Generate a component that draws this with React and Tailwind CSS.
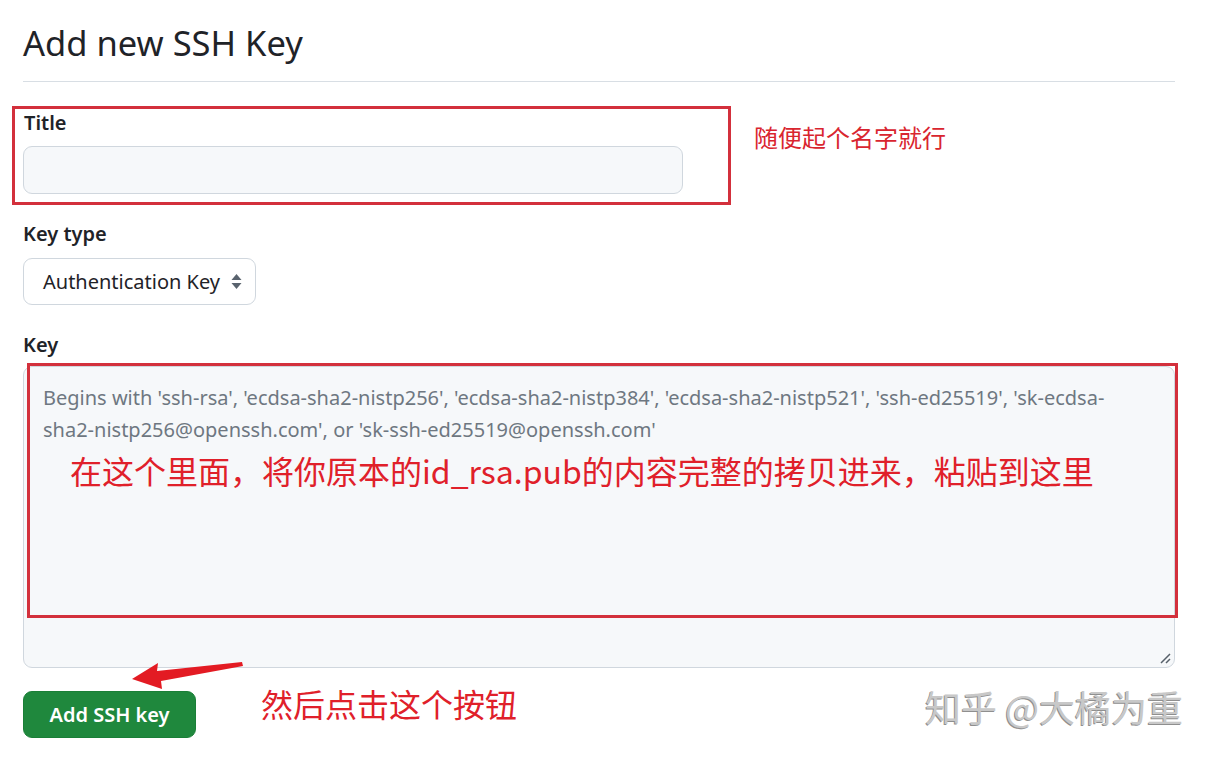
import React from "react";

const ui = { fontFamily: '"Noto Sans", "Liberation Sans", sans-serif' };
const cjk = { fontFamily: '"Noto Sans CJK SC", "Noto Sans", sans-serif' };

export default function App() {
  return (
    <div className="relative w-[1212px] h-[757px] bg-white overflow-hidden text-[#1f2328]" style={ui}>
      <div className="ml-[23px] w-[1152px] pt-[20px] flex flex-col">
        <h2 className="text-[34.5px] leading-[45px] font-normal pb-[16px] border-b border-[#d8dee4]">Add new SSH Key</h2>

        {/* Title row with annotation */}
        <div className="mt-[24px] flex items-start">
          <div className="-ml-[11px] w-[719px] border-[3px] border-[#d3303c] pl-[8px] pb-[8px] flex flex-col">
            <label className="text-[20px] leading-[28px] font-semibold pl-[1px]">Title</label>
            <div className="mt-[9px] w-[660px] h-[48px] rounded-[9px] border border-[#d0d7de] bg-[#f6f8fa]" />
          </div>
          <span className="ml-[23px] mt-[14px] text-[24px] leading-[34px] text-[#d9252f]" style={cjk}>随便起个名字就行</span>
        </div>

        <label className="mt-[15px] text-[20px] leading-[28px] font-semibold">Key type</label>
        <div className="mt-[10px] w-[233px] h-[47px] rounded-[9px] border border-[#d0d7de] bg-white flex items-center justify-between pl-[19px] pr-[13px]">
          <span className="text-[20px] leading-[28px]">Authentication Key</span>
          <svg width="11" height="17" viewBox="0 0 11 17">
            <path d="M5.5 1 L10.5 7 H0.5 Z" fill="#59636e" />
            <path d="M5.5 16 L10.5 10 H0.5 Z" fill="#59636e" />
          </svg>
        </div>

        <label className="mt-[26px] text-[20px] leading-[28px] font-semibold">Key</label>
        <div className="relative mt-[7px] w-[1152px] h-[302px] rounded-[9px] border border-[#d0d7de] bg-[#f6f8fa] pl-[19px] pr-[40px] pt-[15px]">
          <p className="text-[20px] leading-[32px] text-[#6e7781]">
            Begins with 'ssh-rsa', 'ecdsa-sha2-nistp256', 'ecdsa-sha2-nistp384', 'ecdsa-sha2-nistp521', 'ssh-ed25519', 'sk-ecdsa-sha2-nistp256@openssh.com', or 'sk-ssh-ed25519@openssh.com'
          </p>
          <p className="mt-[3px] ml-[27px] text-[32px] leading-[42px] text-[#e0202a] whitespace-nowrap" style={cjk}>
            在这个里面，将你原本的id_rsa.pub的内容完整的拷贝进来，粘贴到这里
          </p>
          {/* annotation frame lying over the textarea */}
          <div className="absolute left-[3px] -top-[4px] w-[1151px] h-[255px] border-[3px] border-[#d3303c] pointer-events-none" />
          <svg width="12" height="12" viewBox="0 0 12 12" className="absolute right-[3px] bottom-[3px]">
            <path d="M11 2 L2 11 M11 7 L7 11" stroke="#57606a" strokeWidth="1.5" />
          </svg>
        </div>

        <div className="relative mt-[23px] h-[47px] flex items-center">
          <button className="shrink-0 w-[173px] h-[47px] rounded-[9px] bg-[#1f883d] text-white text-[20px] font-semibold flex items-center justify-center border border-[#1a7f37]">
            Add SSH key
          </button>
          <span className="ml-[65px] mb-[24px] text-[32px] leading-[44px] text-[#e0202a]" style={cjk}>然后点击这个按钮</span>
          <span className="ml-auto -mr-[8px] mb-[18px] text-[36px] leading-[44px] text-[#c8c8c8]" style={{ ...cjk, textShadow: "-1px 1px 0 #8f8f8f" }}>知乎 @大橘为重</span>
          {/* annotation arrow */}
          <svg className="absolute left-[77px] -top-[41px]" width="160" height="60" viewBox="100 650 160 60">
            <polygon points="132,679 158,663 157,671 242,662 243,666 161,681 162,689" fill="#e31b23" />
          </svg>
        </div>
      </div>
    </div>
  );
}
